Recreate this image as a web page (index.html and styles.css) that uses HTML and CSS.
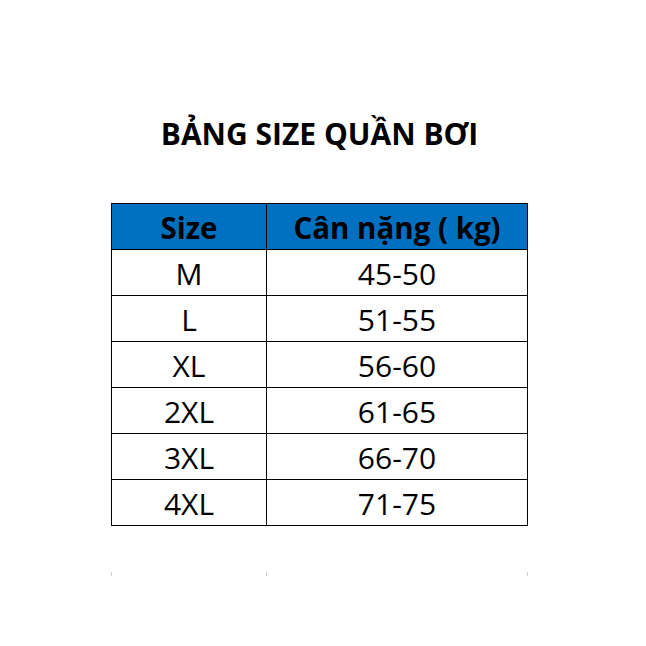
FILE: index.html
```html
<!DOCTYPE html>
<html lang="vi">
<head>
<meta charset="utf-8">
<title>Bảng size quần bơi</title>
<link rel="stylesheet" href="styles.css">
</head>
<body>
<div class="page">
  <h1 class="title">BẢNG SIZE QUẦN BƠI</h1>
  <div class="table">
    <div class="cell head">Size</div>
    <div class="cell head">Cân nặng ( kg)</div>
    <div class="cell">M</div><div class="cell">45-50</div>
    <div class="cell">L</div><div class="cell">51-55</div>
    <div class="cell">XL</div><div class="cell">56-60</div>
    <div class="cell">2XL</div><div class="cell">61-65</div>
    <div class="cell">3XL</div><div class="cell">66-70</div>
    <div class="cell">4XL</div><div class="cell">71-75</div>
  </div>
  <div class="ticks">
    <div class="tick"></div>
    <div class="tick last"></div>
  </div>
</div>
</body>
</html>
```
FILE: styles.css
```css
html, body {
  margin: 0;
  padding: 0;
  background: #ffffff;
}
body {
  font-family: "Open Sans", "Noto Sans", sans-serif;
  color: #000000;
}
.page {
  width: 417px;
  margin-left: 111px;
  padding-top: 114px;
}
.title {
  margin: 0;
  font-size: 30px;
  font-weight: 700;
  line-height: 40px;
  text-align: center;
  letter-spacing: 0;
}
.table {
  margin-top: 49px;
  display: grid;
  grid-template-columns: 155px 261px;
  border-top: 1px solid #000;
  border-left: 1px solid #000;
}
.cell {
  border-right: 1px solid #000;
  border-bottom: 1px solid #000;
  display: flex;
  align-items: center;
  justify-content: center;
  font-size: 30px;
  line-height: 45px;
  padding-top: 1px;
  box-sizing: content-box;
  height: 44px;
}
.head {
  background: #0070c0;
  font-weight: 700;
  font-size: 29.5px;
}
.ticks {
  margin-top: 46px;
  display: grid;
  grid-template-columns: 155px 262px;
}
.tick {
  height: 4px;
  border-left: 1px solid #d0d0d0;
}
.tick.last {
  border-right: 1px solid #d0d0d0;
}
```
